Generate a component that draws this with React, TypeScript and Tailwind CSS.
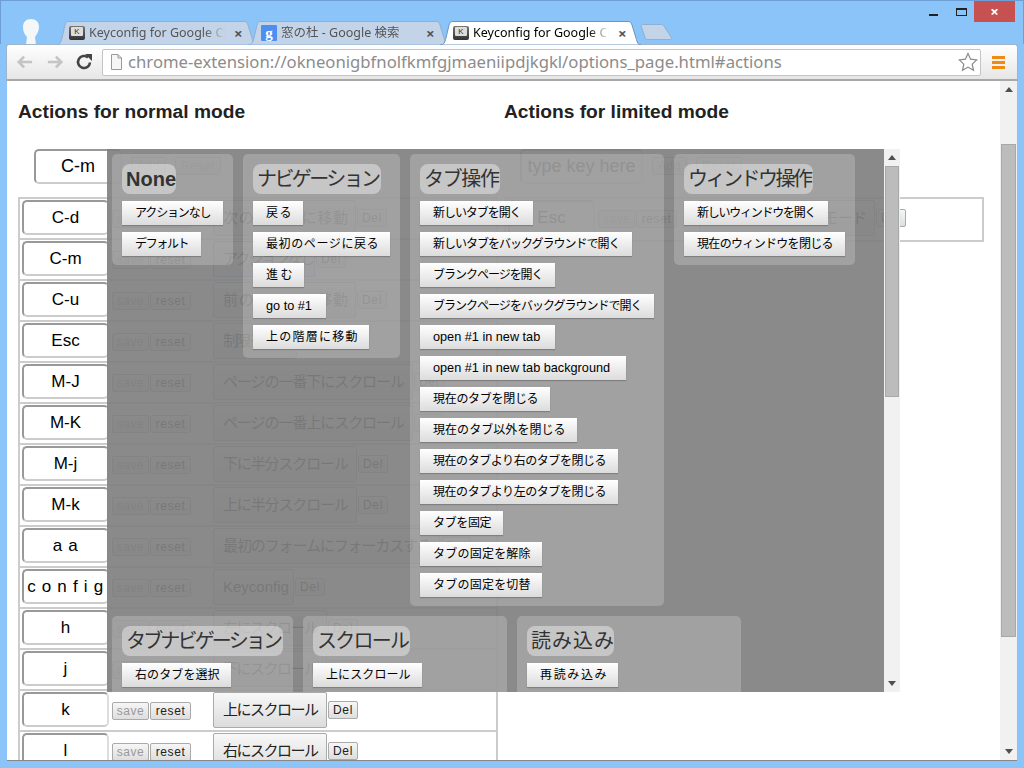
import React from 'react';

const uiFont = "font-['Noto_Sans','Noto_Sans_CJK_JP',sans-serif]";
const pageFont = "font-['Liberation_Sans','Noto_Sans_CJK_JP',sans-serif]";

const rows = [
  { key: 'C-d', action: '次のページに移動', width: 'w-[143px]' },
  { key: 'C-m', action: 'アクションなし', width: 'w-[102px]', focused: true },
  { key: 'C-u', action: '前のページに移動', width: 'w-[143px]' },
  { key: 'Esc', action: '制限モード', width: 'w-[84px]' },
  { key: 'M-J', action: 'ページの一番下にスクロール', width: 'w-[200px]' },
  { key: 'M-K', action: 'ページの一番上にスクロール', width: 'w-[200px]' },
  { key: 'M-j', action: '下に半分スクロール', width: 'w-[144px]' },
  { key: 'M-k', action: '上に半分スクロール', width: 'w-[144px]' },
  { key: 'a a', action: '最初のフォームにフォーカスする', width: 'w-[227px]', spaced: true },
  { key: 'c o n f i g', action: 'Keyconfig', width: 'w-[81px]', spaced: true },
  { key: 'h', action: '左にスクロール', width: 'w-[114px]' },
  { key: 'j', action: '下にスクロール', width: 'w-[114px]' },
  { key: 'k', action: '上にスクロール', width: 'w-[114px]' },
  { key: 'l', action: '右にスクロール', width: 'w-[114px]' },
];

const panels = [
  {
    title: 'None', panelW: 'w-[121px]', titleW: 'w-[54px]', bold: true,
    items: [['アクションなし', 'w-[101px]'], ['デフォルト', 'w-[79px]']],
  },
  {
    title: 'ナビゲーション', panelW: 'w-[157px]', titleW: 'w-[128px]',
    items: [['戻る', 'w-[50px]'], ['最初のページに戻る', 'w-[137px]'], ['進む', 'w-[51px]'], ['go to #1', 'w-[73px]'], ['上の階層に移動', 'w-[116px]']],
  },
  {
    title: 'タブ操作', panelW: 'w-[254px]', titleW: 'w-[80px]',
    items: [
      ['新しいタブを開く', 'w-[113px]'],
      ['新しいタブをバックグラウンドで開く', 'w-[212px]'],
      ['ブランクページを開く', 'w-[135px]'],
      ['ブランクページをバックグラウンドで開く', 'w-[234px]'],
      ['open #1 in new tab', 'w-[135px]'],
      ['open #1 in new tab background', 'w-[206px]'],
      ['現在のタブを閉じる', 'w-[130px]'],
      ['現在のタブ以外を閉じる', 'w-[157px]'],
      ['現在のタブより右のタブを閉じる', 'w-[198px]'],
      ['現在のタブより左のタブを閉じる', 'w-[198px]'],
      ['タブを固定', 'w-[83px]'],
      ['タブの固定を解除', 'w-[122px]'],
      ['タブの固定を切替', 'w-[122px]'],
    ],
  },
  {
    title: 'ウィンドウ操作', panelW: 'w-[181px]', titleW: 'w-[129px]',
    items: [['新しいウィンドウを開く', 'w-[144px]'], ['現在のウィンドウを閉じる', 'w-[161px]']],
  },
  {
    title: 'タブナビゲーション', panelW: 'w-[181px]', titleW: 'w-[161px]',
    items: [['右のタブを選択', 'w-[109px]'], ['左のタブを選択', 'w-[109px]']],
  },
  {
    title: 'スクロール', panelW: 'w-[204px]', titleW: 'w-[97px]',
    items: [['上にスクロール', 'w-[109px]'], ['下にスクロール', 'w-[109px]']],
  },
  {
    title: '読み込み', panelW: 'w-[224px]', titleW: 'w-[87px]',
    items: [['再読み込み', 'w-[91px]'], ['キャッシュを無視して再読み込み', 'w-[198px]']],
  },
];

const isLatin = (s: string) => /^[ -~]+$/.test(s);

function SmallButton({ label, width, dim }: { label: string; width: string; dim?: boolean }) {
  return (
    <button className={`${width} h-[18px] shrink-0 rounded-[2px] border border-[#aaa] bg-gradient-to-b from-[#f6f6f6] to-[#dedede] text-[12px] leading-[16px] tracking-[0.6px] ${dim ? 'text-[#999]' : 'text-[#222]'}`}>
      {label}
    </button>
  );
}

function KeyBox({ label, width, textClass }: { label: string; width: string; textClass: string }) {
  return (
    <div className={`${width} ${textClass} h-[35px] shrink-0 rounded-[5px] border-2 border-t-[#999] border-l-[#999] border-r-[#ddd] border-b-[#ccc] bg-white text-center leading-[31px] text-black whitespace-pre`}>
      {label}
    </div>
  );
}

function ActionButton({ label, width, focused }: { label: string; width: string; focused?: boolean }) {
  return (
    <button className={`${width} block h-[36px] shrink-0 rounded-[2px] border ${focused ? 'border-[#4d90fe]' : 'border-[#aaa]'} bg-gradient-to-b from-[#f8f8f8] to-[#dcdcdc] px-[9px] text-[15px] text-[#222] whitespace-nowrap overflow-hidden ${isLatin(label) ? 'text-left' : 'tracking-[-2px] [text-align-last:justify]'}`}>
      {label}
    </button>
  );
}

function KeyRow({ keyName, action, width, focused, spaced, last }: { keyName: string; action: string; width: string; focused?: boolean; spaced?: boolean; last?: boolean }) {
  return (
    <div className={`flex h-[41px] items-start pl-[2px] pt-[1px] ${last ? '' : 'border-b-2 border-[#ccc]'}`}>
      <KeyBox label={keyName} width="w-[87px]" textClass={spaced ? 'text-[17px] tracking-[0.7px]' : 'text-[17px]'} />
      <div className="ml-[3px] mt-[10px] flex gap-px">
        <SmallButton label="save" width="w-[37px]" dim />
        <SmallButton label="reset" width="w-[41px]" />
      </div>
      <div className="ml-[22px] flex items-center gap-px">
        <ActionButton label={action} width={width} focused={focused} />
        <SmallButton label="Del" width="w-[30px]" />
      </div>
    </div>
  );
}

function AddRow({ label, boxWidth }: { label: string; boxWidth: string }) {
  return (
    <div className="ml-[16px] flex h-[34px] items-center">
      <KeyBox label={label} width={boxWidth} textClass="text-[18px]" />
      <div className="ml-[9px] flex gap-[9px]">
        <SmallButton label="Add" width="w-[35px]" dim />
        <SmallButton label="Reset" width="w-[46px]" dim />
      </div>
    </div>
  );
}

function Favicon() {
  return (
    <div className="flex h-[14px] w-[16px] shrink-0 items-start justify-center rounded-[2px] bg-gradient-to-b from-[#777] to-[#333] p-px">
      <div className="h-[9px] w-[12px] rounded-[1px] bg-[#ddd] text-center font-['Liberation_Sans',sans-serif] text-[8px] leading-[9px] text-[#333]">K</div>
    </div>
  );
}

function GoogleIcon() {
  return (
    <div className="flex h-[16px] w-[16px] shrink-0 items-center justify-center rounded-[1px] bg-[#4d8ff0] font-['Liberation_Serif',serif] text-[15px] font-bold leading-[14px] text-white">
      g
    </div>
  );
}

function Tab({ title, icon, active }: { title: string; icon: React.ReactNode; active?: boolean }) {
  return (
    <div className={`relative -mr-[9px] h-[24px] w-[201px] shrink-0 ${active ? 'z-20' : 'z-10'}`}>
      <svg className="absolute inset-0" width="201" height="24" viewBox="0 0 201 24">
        <path
          d="M0 24C4 24 5 21 6 17L9 4C10 1 11 .5 13 .5L188 .5C190 .5 191 1 192 4L196 17C197 21 198 24 201 24Z"
          fill={active ? '#ffffff' : '#c3d4e8'}
          stroke={active ? '#6f93bb' : '#8fb0d4'}
        />
      </svg>
      <div className="relative flex h-full items-center pl-[13px]">
        {icon}
        <span className={`ml-[4px] w-[136px] overflow-hidden whitespace-nowrap text-[12.5px] leading-[18px] [mask-image:linear-gradient(to_right,black_85%,transparent)] ${active ? 'text-black' : 'text-[#555]'}`}>
          {title}
        </span>
        <span className="ml-[9px] text-[15px] font-bold leading-none text-[#555]">×</span>
      </div>
    </div>
  );
}

function Arrow({ up }: { up?: boolean }) {
  return (
    <div className="flex h-[17px] items-center justify-center">
      <div className={`h-0 w-0 border-x-[4px] border-x-transparent ${up ? 'border-b-[5px] border-b-[#505050]' : 'border-t-[5px] border-t-[#505050]'}`} />
    </div>
  );
}

function Scrollbar({ className, spacer, thumb }: { className: string; spacer: string; thumb: string }) {
  return (
    <div className={`flex shrink-0 flex-col bg-[#f1f1f1] ${className}`}>
      <Arrow up />
      <div className={spacer} />
      <div className={`mx-px ${thumb} border border-[#a8a8a8] bg-[#bcbcbc]`} />
      <div className="flex-1" />
      <Arrow />
    </div>
  );
}

function Panel({ title, panelW, titleW, bold, items }: (typeof panels)[number]) {
  return (
    <div className={`${panelW} shrink-0 rounded-[5px] bg-white/20 px-[10px] pb-[9px] pt-[10px]`}>
      <div className={`${titleW} mb-[7px] h-[30px] whitespace-nowrap rounded-[8px] bg-white/40 px-[4px] text-[20px] leading-[30px] text-[#333] ${bold ? 'font-bold' : 'tracking-[-4px] [text-align-last:justify]'}`}>
        {title}
      </div>
      <div className="flex flex-col items-start gap-[7px]">
        {items.map(([label, width]) => (
          <div
            key={label}
            className={`${width} h-[24px] whitespace-nowrap bg-gradient-to-b from-white to-[#dcdcdc] px-[13px] leading-[24px] text-black shadow-[0_1px_1px_rgba(0,0,0,0.2)] ${isLatin(label) ? 'text-[12.7px]' : 'text-[12px] tracking-[-1.6px] [text-align-last:justify]'}`}
          >
            {label}
          </div>
        ))}
      </div>
    </div>
  );
}

export default function App() {
  return (
    <div className={`flex h-[768px] w-[1024px] flex-col overflow-hidden bg-[#8ac4f9] ${pageFont}`}>
      {/* title bar */}
      <div className={`relative flex h-[44px] shrink-0 items-end border-x border-t border-[#6d9fd6] ${uiFont}`}>
        <svg className="absolute left-[20px] top-[18px]" width="20" height="26" viewBox="0 0 20 26">
          <path d="M10 0C5 0 2 3 2 8C2 13 4 16 6 18L5 26L15 26L14 18C16 15 18 12 18 8C18 3 15 0 10 0Z" fill="#f4f6f8" />
        </svg>
        <div className="relative -mb-px ml-[55px] flex items-end">
          <Tab title="Keyconfig for Google Chrome" icon={<Favicon />} />
          <Tab title="窓の杜 - Google 検索" icon={<GoogleIcon />} />
          <Tab title="Keyconfig for Google Chrome" icon={<Favicon />} active />
          <svg className="relative z-0 mb-[5px] ml-[8px]" width="33" height="16" viewBox="0 0 33 16">
            <path d="M1 2C1 1 2 .5 3 .5L21 .5C22 .5 23 1 24 2L31 13C32 15 31 15.5 30 15.5L8 15.5C6 15.5 5 15 5 13Z" fill="#c3d4e8" stroke="#8fb0d4" />
          </svg>
        </div>
        {/* window controls */}
        <div className="absolute right-[8px] top-0 flex items-start">
          <div className="mr-[18px] mt-[13px] h-[2px] w-[9px] bg-[#222]" />
          <div className="mr-[7px] mt-[7px] h-[8px] w-[11px] border border-t-2 border-[#222]" />
          <div className="flex h-[21px] w-[41px] items-center justify-center bg-[#c75050] text-[15px] font-bold leading-none text-white">×</div>
        </div>
      </div>

      {/* toolbar */}
      <div className={`relative mx-[6px] flex h-[37px] shrink-0 items-center rounded-t-[3px] border-x border-t border-[#9fb4cc] border-b-2 border-b-[#a8a8a8] bg-gradient-to-b from-white to-[#e6e6e6] ${uiFont}`}>
        <svg className="ml-[9px]" width="18" height="16" viewBox="0 0 20 18" fill="none" stroke="#c4c4c4" strokeWidth="3">
          <path d="M18 9H3M9 3L3 9L9 15" />
        </svg>
        <svg className="ml-[12px]" width="18" height="16" viewBox="0 0 20 18" fill="none" stroke="#c4c4c4" strokeWidth="3">
          <path d="M2 9H17M11 3L17 9L11 15" />
        </svg>
        <svg className="ml-[11px]" width="18" height="18" viewBox="0 0 18 18" fill="none">
          <path d="M15 9.5A6 6 0 1 1 13 4.5" stroke="#444" strokeWidth="2.6" />
          <path d="M10 1L17 1L17 8Z" fill="#444" />
        </svg>
        <div className="ml-[9px] flex h-[27px] w-[879px] items-center rounded-[2px] border border-[#c4c4c4] bg-white">
          <svg className="ml-[7px]" width="13" height="16" viewBox="0 0 13 16" fill="#f6f6f6" stroke="#999">
            <path d="M1.5 .5H8L11.5 4V15.5H1.5Z" />
            <path d="M8 .5V4H11.5" fill="none" />
          </svg>
          <span className="ml-[5px] whitespace-nowrap text-[16.7px] leading-[24px] text-[#8c8c8c]">
            chrome-extension://okneonigbfnolfkmfgjmaeniipdjkgkl/options_page.html#actions
          </span>
          <svg className="ml-auto mr-[2px]" width="20" height="20" viewBox="0 0 20 20" fill="white" stroke="#888" strokeWidth="1.2">
            <path d="M10 1.5L12.6 7.2L18.8 7.9L14.2 12.1L15.5 18.3L10 15.1L4.5 18.3L5.8 12.1L1.2 7.9L7.4 7.2Z" />
          </svg>
        </div>
        <div className="ml-[11px] flex w-[13px] flex-col gap-[2px]">
          <div className="h-[3px] bg-[#f08a10]" />
          <div className="h-[3px] bg-[#f08a10]" />
          <div className="h-[3px] bg-[#f08a10]" />
        </div>
      </div>

      {/* page */}
      <div className="mx-[7px] flex min-h-0 flex-1 border-b border-[#888] bg-white">
        <div className="relative flex-1 overflow-hidden pl-[11px]">
          <div className="flex">
            <div className="w-[486px] shrink-0">
              <h2 className="mt-[20px] whitespace-nowrap text-[19.2px] font-bold leading-[22px] text-[#222]">Actions for normal mode</h2>
              <div className="mt-[26px]">
                <AddRow label="C-m" boxWidth="w-[88px]" />
              </div>
              <div className="mt-[14px] w-[480px] border-x-2 border-t-2 border-[#ccc]">
                {rows.map((r) => (
                  <KeyRow key={r.key} keyName={r.key} action={r.action} width={r.width} focused={r.focused} spaced={r.spaced} />
                ))}
              </div>
            </div>
            <div className="shrink-0">
              <h2 className="mt-[20px] whitespace-nowrap text-[19.2px] font-bold leading-[22px] text-[#222]">Actions for limited mode</h2>
              <div className="mt-[26px]">
                <AddRow label="type key here" boxWidth="w-[123px]" />
              </div>
              <div className="mt-[14px] w-[480px] border-2 border-[#ccc]">
                <KeyRow keyName="Esc" action="キーを無効にするモード" width="w-[176px]" last />
              </div>
            </div>
          </div>

          {/* action picker lying over the page */}
          <div className="absolute left-[100px] top-[68px] z-10 flex h-[543px] w-[793px]">
            <div className="flex min-w-0 flex-1 flex-wrap content-start items-start gap-[10px] overflow-hidden bg-[rgba(128,128,128,0.92)] p-[5px]">
              {panels.map((p) => (
                <Panel key={p.title} {...p} />
              ))}
            </div>
            <Scrollbar className="w-[16px]" spacer="h-0" thumb="h-[231px]" />
          </div>
        </div>
        <Scrollbar className="w-[17px]" spacer="h-[46px]" thumb="h-[493px]" />
      </div>
      <div className="h-[7px] shrink-0" />
    </div>
  );
}
